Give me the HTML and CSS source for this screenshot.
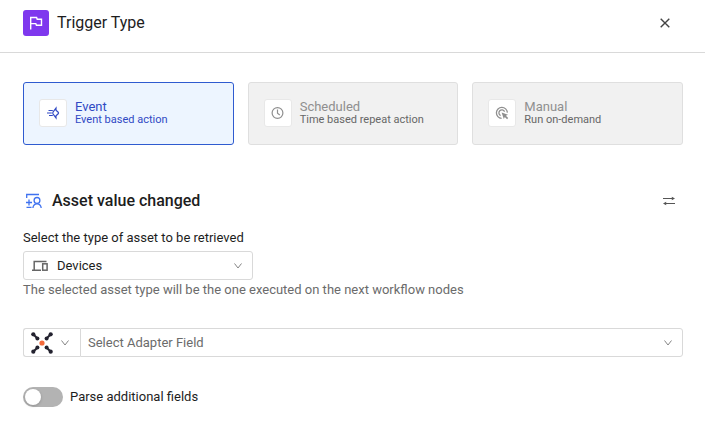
FILE: index.html
```html
<!DOCTYPE html>
<html lang="en">
<head>
<meta charset="utf-8">
<meta name="viewport" content="width=device-width, initial-scale=1">
<title>Trigger Type</title>
<link rel="stylesheet" href="styles.css">
</head>
<body>
<header class="header">
  <span class="header-icon">
    <svg width="14" height="14" viewBox="0 0 14 14" fill="none" stroke="currentColor" stroke-width="1.4"><path d="M1.7 13.5V1.5H7.6L8.2 3.2H12.5V9.2H7.4L6.8 7.6H1.7"/></svg>
  </span>
  <h1 class="title">Trigger Type</h1>
  <button class="icon-button" type="button" aria-label="Close">
    <svg width="10" height="10" viewBox="0 0 10 10" fill="none" stroke="currentColor" stroke-width="1.4"><path d="M.7 .7L9.3 9.3M9.3 .7L.7 9.3"/></svg>
  </button>
</header>
<main class="content">
  <div class="cards" role="radiogroup" aria-label="Trigger Type">
    <label class="card card-selected">
      <input class="card-input" type="radio" name="trigger" checked>
      <span class="card-icon">
        <svg width="14" height="14" viewBox="0 0 14 14" fill="none" stroke="currentColor"><path d="M10 2L7 6.2Q6.5 7 7 7.8L10 12V9.7L12.2 7.8Q12.9 7 12.2 6.2L10 4.3Z" stroke-width="1.2"/><path d="M2.5 4.5H6.8M1 7H5.8M3 9.5H6.8"/></svg>
      </span>
      <span class="card-text"><span class="card-name">Event</span><span class="card-note">Event based action</span></span>
    </label>
    <label class="card">
      <input class="card-input" type="radio" name="trigger" disabled>
      <span class="card-icon">
        <svg width="14" height="14" viewBox="0 0 14 14" fill="none" stroke="currentColor" stroke-width="1.2"><circle cx="6.5" cy="7" r="5.4"/><path d="M6.5 3.5V7.2L8.8 8.9"/></svg>
      </span>
      <span class="card-text"><span class="card-name">Scheduled</span><span class="card-note">Time based repeat action</span></span>
    </label>
    <label class="card">
      <input class="card-input" type="radio" name="trigger" disabled>
      <span class="card-icon">
        <svg width="14" height="14" viewBox="0 0 14 14" fill="none" stroke="currentColor" stroke-width="1.3"><path d="M6.6 12.4A5.5 5.5 0 1 1 12.4 6.6M5.6 9.6A3 3 0 1 1 9.6 5.6"/><path d="M6.6 6.6L13 8.8L10.9 9.8L13.2 12.1L12.1 13.2L9.8 10.9L8.8 13Z" fill="currentColor" stroke="none"/></svg>
      </span>
      <span class="card-text"><span class="card-name">Manual</span><span class="card-note">Run on-demand</span></span>
    </label>
  </div>

  <div class="section-head">
    <svg class="section-icon" width="18" height="16" viewBox="0 0 18 16" fill="none" stroke="currentColor" stroke-width="1.3"><path d="M1.7 5V1.5H14M1 9.5H7M4 6.5V12.5M1.5 14.4H6.5"/><circle cx="12" cy="7.4" r="2.9"/><path d="M7.9 15C8.2 11.9 9.9 10.9 12 10.9S15.9 11.9 16.2 15"/></svg>
    <h2 class="section-title">Asset value changed</h2>
    <button class="icon-button swap" type="button" aria-label="Change trigger">
      <svg width="14" height="10" viewBox="0 0 14 10" fill="none" stroke="currentColor"><path d="M1 2.5H11M3 7.5H13" stroke-width="1.1"/><path d="M9.8 .7L13 2.5L9.8 4.3ZM4.2 5.7L1 7.5L4.2 9.3Z" fill="currentColor" stroke="none"/></svg>
    </button>
  </div>

  <label class="field-label" for="asset">Select the type of asset to be retrieved</label>
  <div class="control asset">
    <svg class="lead-icon devices" width="16" height="12" viewBox="0 0 16 12" fill="none" stroke="currentColor" stroke-width="1.5"><path d="M14.5 1.5H2.2V9.8M0 10.2H9"/><rect x="10.7" y="3.8" width="4.4" height="6.4"/></svg>
    <select id="asset" class="select asset-select"><option>Devices</option></select>
    <svg class="chevron" width="8" height="6" viewBox="0 0 8 6" fill="none" stroke="currentColor"><path d="M.5 .5L4 5L7.5 .5"/></svg>
  </div>
  <p class="help">The selected asset type will be the one executed on the next workflow nodes</p>

  <div class="adapter">
    <div class="control adapter-kind">
      <svg class="lead-icon" width="22" height="22" viewBox="0 0 22 22" fill="none"><g stroke="#23222f" stroke-width="2"><path d="M2.5 2.5L7 7M19.5 2.5L15 7M2.5 19.5L7 15M19.5 19.5L15 15"/></g><g fill="#23222f"><circle cx="2.3" cy="2.3" r="2.1"/><circle cx="19.7" cy="2.3" r="2.1"/><circle cx="2.3" cy="19.7" r="2.1"/><circle cx="19.7" cy="19.7" r="2.1"/><circle cx="6.4" cy="6.4" r="2"/><circle cx="15.6" cy="6.4" r="2"/><circle cx="6.4" cy="15.6" r="2"/><circle cx="15.6" cy="15.6" r="2"/></g><circle cx="11" cy="11" r="2.6" fill="#f46a3b"/></svg>
      <select class="select" aria-label="Adapter"><option></option></select>
      <svg class="chevron" width="8" height="6" viewBox="0 0 8 6" fill="none" stroke="currentColor"><path d="M.5 .5L4 5L7.5 .5"/></svg>
    </div>
    <div class="control adapter-field">
      <select class="select field-select" aria-label="Adapter field"><option>Select Adapter Field</option></select>
      <svg class="chevron" width="8" height="6" viewBox="0 0 8 6" fill="none" stroke="currentColor"><path d="M.5 .5L4 5L7.5 .5"/></svg>
    </div>
  </div>

  <label class="toggle"><input class="switch" type="checkbox" role="switch">Parse additional fields</label>
</main>
</body>
</html>
```
FILE: styles.css
```css
* { box-sizing: border-box; }
body {
  margin: 0;
  background: #fff;
  color: #1d1d1d;
  font: 13px/16px Roboto, "Liberation Sans", sans-serif;
}
svg { display: block; flex: none; }
h1, h2, p { margin: 0; }

.header {
  display: flex;
  align-items: center;
  gap: 8px;
  padding: 10px 29px 16px 23px;
  border-bottom: 1px solid #d9d9d9;
}
.header-icon {
  display: grid;
  place-items: center;
  width: 26px;
  height: 26px;
  border-radius: 3px;
  background: #7f38ee;
  color: #fff;
}
.title { flex: 1; font-size: 16px; font-weight: 400; line-height: 24px; }
.icon-button {
  display: grid;
  place-items: center;
  width: 22px;
  height: 22px;
  padding: 0;
  border: 0;
  background: none;
  color: #444;
}

.content { padding: 29px 22px 20px 23px; }
.cards { display: grid; grid-template-columns: repeat(3, 1fr); gap: 14px; }
.card {
  position: relative;
  display: flex;
  align-items: center;
  gap: 8px;
  padding: 16px 15px 17px;
  border: 1px solid #dfdfdf;
  border-radius: 3px;
  background: #f1f1f1;
  color: #8f8f8f;
}
.card-selected { border-color: #2f5bd0; background: #edf5ff; color: #3049c4; }
.card-input { position: absolute; inset: 0; margin: 0; opacity: 0; }
.card-icon {
  display: grid;
  place-items: center;
  width: 28px;
  height: 28px;
  border: 1px solid #e8e8e8;
  border-radius: 3px;
  background: #fff;
}
.card-text { display: flex; flex-direction: column; padding-bottom: 2px; }
.card-name { line-height: 15px; }
.card-note { font-size: 11px; line-height: 11px; color: #676767; }
.card-selected .card-note { color: inherit; }

.section-head { display: flex; align-items: center; gap: 9px; margin-top: 44px; padding: 0 3px 0 2px; }
.section-icon { color: #3f72f0; }
.section-title { flex: 1; font-size: 16px; font-weight: 500; line-height: 24px; }
.swap { color: #555; }

.field-label { display: block; margin: 17px 0 5px; }
.control { position: relative; display: flex; align-items: center; }
.asset { width: 230px; }
.select {
  width: 100%;
  height: 29px;
  padding: 0 32px 0 7px;
  border: 1px solid #d9d9d9;
  border-radius: 3px;
  appearance: none;
  background: #fff;
  color: inherit;
  font: inherit;
}
.asset-select { padding-left: 33px; }
.lead-icon { position: absolute; left: 8px; pointer-events: none; }
.devices { color: #666; left: 9px; }
.chevron { position: absolute; right: 11px; color: #858585; pointer-events: none; }
.help { margin-top: 2px; color: #6b6b6b; }

.adapter { display: flex; margin-top: 30px; }
.adapter-kind { flex: none; width: 57px; }
.adapter-kind .select { border-right: 0; border-radius: 3px 0 0 3px; }
.adapter-field { flex: 1; }
.field-select { border-radius: 0 3px 3px 0; color: #6b6b6b; }

.toggle { display: flex; align-items: center; gap: 7px; margin-top: 30px; }
.switch {
  display: flex;
  width: 40px;
  height: 20px;
  margin: 0;
  padding: 2px;
  appearance: none;
  border-radius: 10px;
  background: #b3b3b3;
}
.switch::before {
  content: "";
  width: 16px;
  height: 16px;
  border-radius: 50%;
  background: #fff;
  box-shadow: 0 1px 3px rgba(0, 0, 0, .2);
}
.switch:checked { justify-content: flex-end; background: #2f5bd0; }
```
